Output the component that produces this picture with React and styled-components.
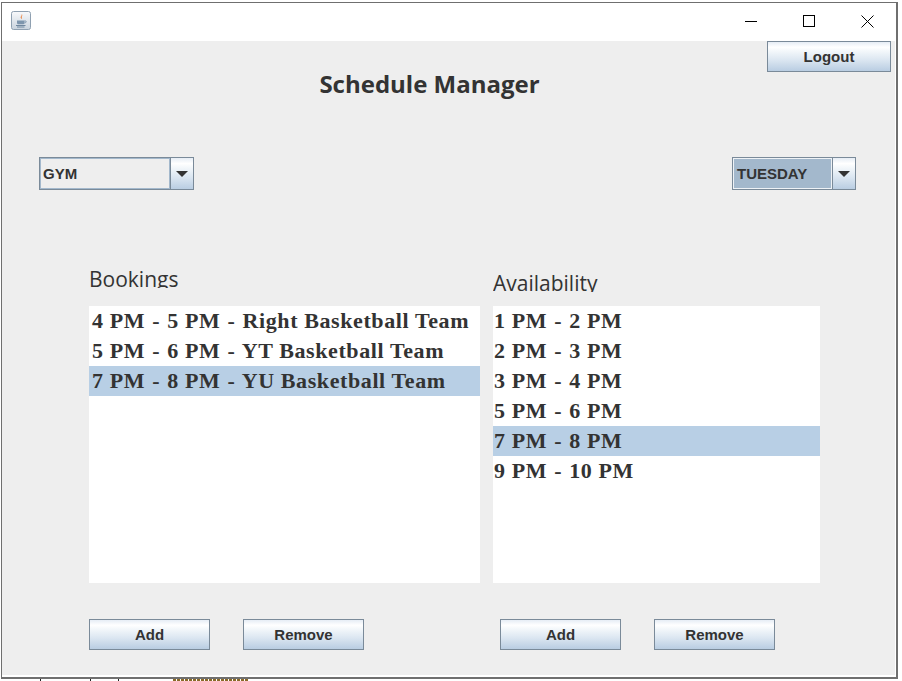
import React from 'react'
import styled, { createGlobalStyle } from 'styled-components'

const GlobalStyle = createGlobalStyle`
  html, body {
    margin: 0;
    padding: 0;
    background: #ffffff;
    overflow: hidden;
  }
  * {
    box-sizing: border-box;
  }
`

const SWING_GRADIENT = 'linear-gradient(to bottom, #e6edf5 0%, #ffffff 18%, #f4f8fb 30%, #dbe6f1 62%, #b9cde2 100%)'

const Page = styled.div`
  width: 902px;
  height: 681px;
  padding: 2px 3px 0 1px;
`

const Window = styled.div`
  display: flex;
  flex-direction: column;
  width: 897px;
  height: 677px;
  background: #ffffff;
  border: 1px solid #6f6f6f;
  border-right-width: 2px;
  border-bottom-width: 2px;
  color: #333333;
`

// the bit of the window behind that shows under this one
const BackdropStrip = styled.div`
  height: 2px;
  margin-left: -1px;
  background:
    repeating-linear-gradient(to right, #8a6a2a 0 3px, #ffffff 3px 4px) 173px 0 / 75px 2px no-repeat,
    linear-gradient(#222222, #222222) 40px 0 / 1px 2px no-repeat,
    linear-gradient(#222222, #222222) 90px 0 / 1px 2px no-repeat,
    linear-gradient(#222222, #222222) 118px 0 / 1px 2px no-repeat;
`

const TitleBar = styled.header`
  display: flex;
  align-items: center;
  justify-content: space-between;
  flex-shrink: 0;
  height: 38px;
  background: #ffffff;
  padding: 0 0 2px 9px;
`

const WindowControls = styled.div`
  display: flex;
`

const ControlButton = styled.div`
  display: flex;
  align-items: center;
  justify-content: center;
  width: 58px;
  height: 30px;
`

const Content = styled.main`
  display: flex;
  flex-direction: column;
  flex: 1;
  margin: 0 1px 2px 0;
  background: #eeeeee;
`

const TopRow = styled.div`
  display: flex;
  justify-content: flex-end;
  height: 31px;
  padding-right: 4px;
`

const SwingButton = styled.button`
  width: ${({ $wide }) => ($wide ? 124 : 121)}px;
  height: 31px;
  padding: 0;
  background: ${SWING_GRADIENT};
  border: 1px solid #7a8a99;
  color: #333333;
  font-family: "Liberation Sans", Arial, sans-serif;
  font-size: 15px;
  font-weight: 700;
`

const Heading = styled.h1`
  height: 85px;
  margin: 0;
  padding: 0 38px 0 0;
  font-family: "Open Sans", "DejaVu Sans", sans-serif;
  font-size: 24px;
  font-weight: 700;
  line-height: 23px;
  text-align: center;
  color: #333333;
`

const ComboRow = styled.div`
  display: flex;
  justify-content: space-between;
  height: 109px;
  padding: 0 39px 0 37px;
`

const Combo = styled.div`
  display: flex;
  width: ${({ $width }) => $width}px;
  height: 33px;
  border: 1px solid #7a8a99;
`

const ComboValue = styled.div`
  flex: 1;
  display: flex;
  align-items: center;
  padding-left: ${({ $selected }) => ($selected ? 3 : 2)}px;
  background: ${({ $selected }) => ($selected ? '#a3b8cc' : '#eeeeee')};
  border: 1px solid ${({ $selected }) => ($selected ? '#eef2f6' : '#a3b8cc')};
  font-family: "Liberation Sans", Arial, sans-serif;
  font-size: 15px;
  font-weight: 700;
  color: #333333;
`

const ComboArrow = styled.div`
  display: flex;
  align-items: center;
  justify-content: center;
  width: 23px;
  border-left: 1px solid #7a8a99;
  background: ${SWING_GRADIENT};
`

const ArrowGlyph = styled.span`
  width: 0;
  height: 0;
  border-left: 6px solid transparent;
  border-right: 6px solid transparent;
  border-top: 6px solid #333333;
`

const Columns = styled.div`
  display: grid;
  grid-template-columns: 391px 327px;
  column-gap: 13px;
  padding-left: 87px;
`

const Column = styled.section`
  display: flex;
  flex-direction: column;
`

// the labels are too short for their font in the original, the descenders get clipped
const ColumnLabel = styled.div`
  height: 22px;
  margin-top: ${({ $offset }) => $offset}px;
  margin-bottom: ${({ $offset }) => 18 - $offset}px;
  overflow: hidden;
  font-family: "Open Sans", "DejaVu Sans", sans-serif;
  font-size: 21px;
  line-height: 27px;
  color: #333333;
`

const List = styled.ul`
  height: 277px;
  margin: 0;
  padding: 0;
  list-style: none;
  background: #ffffff;
`

const ListItem = styled.li`
  height: 30px;
  padding-left: ${({ $indent }) => $indent}px;
  background: ${({ $selected }) => ($selected ? '#b8cfe5' : 'transparent')};
  font-family: "Liberation Serif", "Times New Roman", serif;
  font-size: 22px;
  font-weight: 700;
  letter-spacing: 0.6px;
  line-height: 30px;
  white-space: nowrap;
  color: #333333;
`

const Dash = styled.span`
  margin: 0 1px;
`

const ButtonGroup = styled.div`
  display: flex;
  gap: 33px;
  width: ${({ $width }) => $width}px;
`

const ButtonRow = styled.div`
  display: flex;
  gap: 20px;
  margin-top: 36px;
  padding-left: 87px;
`

const JavaIcon = () => (
  <svg width="21" height="20" viewBox="0 0 21 20">
    <defs>
      <linearGradient id="tile" x1="0" y1="0" x2="0" y2="1">
        <stop offset="0" stopColor="#f8f9fb" />
        <stop offset="1" stopColor="#c9d3de" />
      </linearGradient>
    </defs>
    <rect x="0.5" y="0.5" width="19" height="18" rx="2" fill="url(#tile)" stroke="#8fa0b1" />
    <path d="M10.5 3c1.2 1.4-1.6 2.4-.6 4 .3.5.6.9.5 1.3 1.2-1.2-.5-2.2.6-3.3.4-.5.6-1.2-.5-2z" fill="#e8772e" />
    <path d="M6 9.5h7.5v2.2c0 1-.9 1.6-1.8 1.6H7.8c-.9 0-1.8-.6-1.8-1.6z" fill="#7d95ad" />
    <path d="M13.5 10h1.2c.8 0 .8 1.8-1.2 2" fill="none" stroke="#7d95ad" />
    <path d="M5 14.5h9.5M6 16h7.5" stroke="#6f879f" strokeWidth="1" />
  </svg>
)

const MinimizeIcon = () => (
  <svg width="12" height="12" viewBox="0 0 12 12">
    <path d="M0 6.5h12" stroke="#000" strokeWidth="1" />
  </svg>
)

const MaximizeIcon = () => (
  <svg width="12" height="12" viewBox="0 0 12 12">
    <rect x="0.5" y="0.5" width="11" height="11" fill="none" stroke="#000" strokeWidth="1" />
  </svg>
)

const CloseIcon = () => (
  <svg width="13" height="13" viewBox="0 0 13 13">
    <path d="M0.5 0.5l12 12M12.5 0.5l-12 12" stroke="#000" strokeWidth="1" />
  </svg>
)

const bookings = [
  { parts: ['4 PM', '5 PM', 'Right Basketball Team'] },
  { parts: ['5 PM', '6 PM', 'YT Basketball Team'] },
  { parts: ['7 PM', '8 PM', 'YU Basketball Team'], selected: true },
]

const availability = [
  { parts: ['1 PM', '2 PM'] },
  { parts: ['2 PM', '3 PM'] },
  { parts: ['3 PM', '4 PM'] },
  { parts: ['5 PM', '6 PM'] },
  { parts: ['7 PM', '8 PM'], selected: true },
  { parts: ['9 PM', '10 PM'] },
]

const Slot = ({ parts, ...props }) => (
  <ListItem {...props}>
    {parts.map((part, i) => (
      <React.Fragment key={part}>
        {i > 0 && <> <Dash>-</Dash> </>}
        {part}
      </React.Fragment>
    ))}
  </ListItem>
)

const App = () => (
  <Page>
    <GlobalStyle />
    <Window>
      <TitleBar>
        <JavaIcon />
        <WindowControls>
          <ControlButton><MinimizeIcon /></ControlButton>
          <ControlButton><MaximizeIcon /></ControlButton>
          <ControlButton><CloseIcon /></ControlButton>
        </WindowControls>
      </TitleBar>
      <Content>
        <TopRow>
          <SwingButton $wide>Logout</SwingButton>
        </TopRow>
        <Heading>Schedule Manager</Heading>
        <ComboRow>
          <Combo $width={155}>
            <ComboValue>GYM</ComboValue>
            <ComboArrow><ArrowGlyph /></ComboArrow>
          </Combo>
          <Combo $width={124}>
            <ComboValue $selected>TUESDAY</ComboValue>
            <ComboArrow><ArrowGlyph /></ComboArrow>
          </Combo>
        </ComboRow>
        <Columns>
          <Column>
            <ColumnLabel $offset={0}>Bookings</ColumnLabel>
            <List>
              {bookings.map(item => (
                <Slot key={item.parts.join()} parts={item.parts} $indent={3} $selected={item.selected} />
              ))}
            </List>
          </Column>
          <Column>
            <ColumnLabel $offset={4}>Availability</ColumnLabel>
            <List>
              {availability.map(item => (
                <Slot key={item.parts.join()} parts={item.parts} $indent={1} $selected={item.selected} />
              ))}
            </List>
          </Column>
        </Columns>
        <ButtonRow>
          <ButtonGroup $width={391}>
            <SwingButton>Add</SwingButton>
            <SwingButton>Remove</SwingButton>
          </ButtonGroup>
          <ButtonGroup $width={275}>
            <SwingButton>Add</SwingButton>
            <SwingButton>Remove</SwingButton>
          </ButtonGroup>
        </ButtonRow>
      </Content>
    </Window>
    <BackdropStrip />
  </Page>
)

export default App
